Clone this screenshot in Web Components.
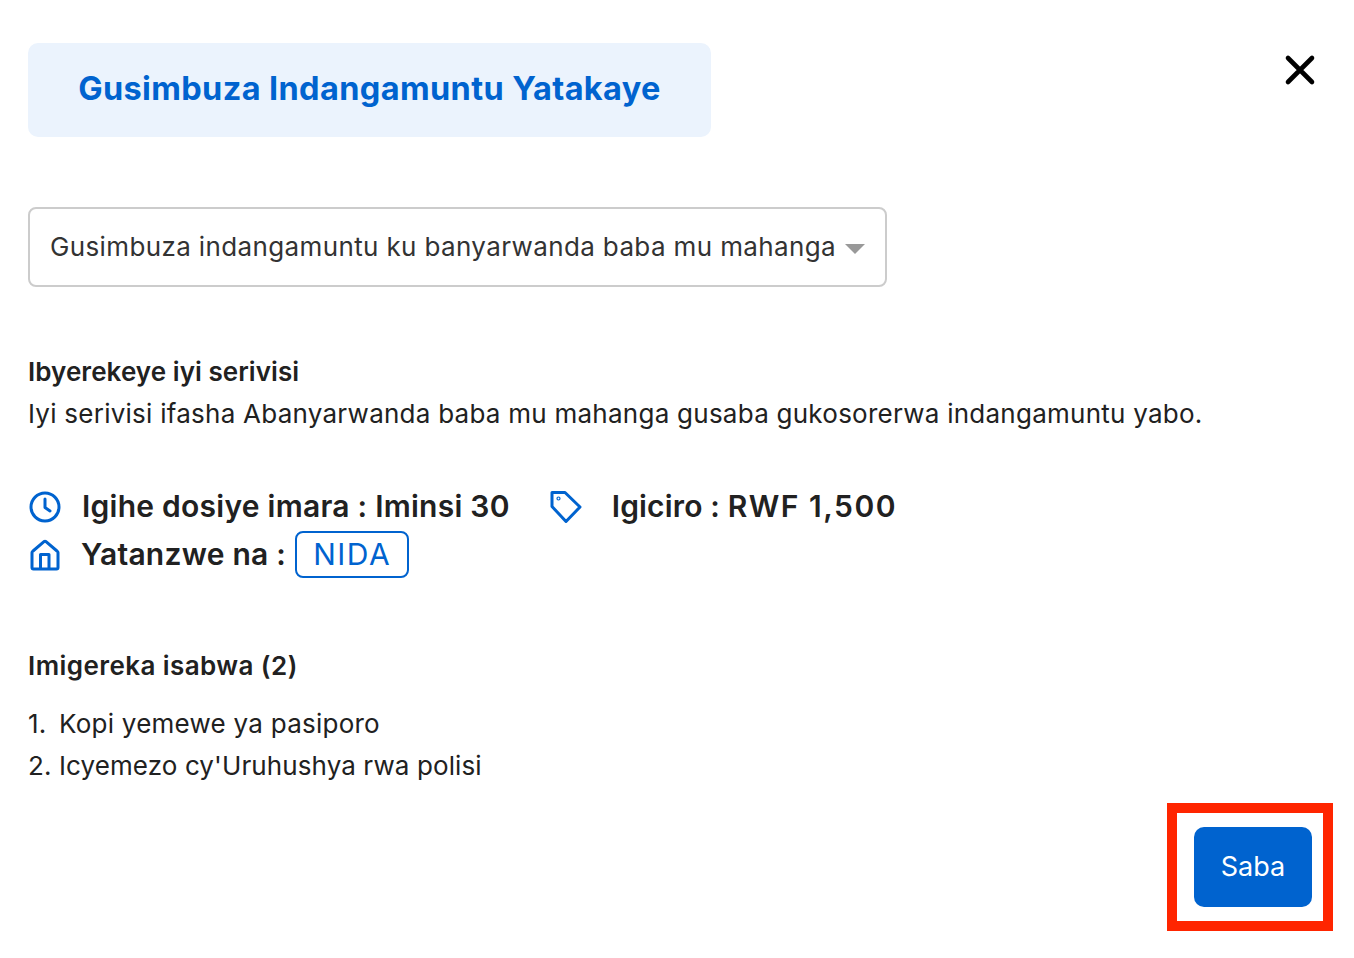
<!DOCTYPE html>
<html><head><meta charset="utf-8"><style>
html,body{margin:0;padding:0;background:#fff}
body{font-family:"Inter","Liberation Sans",sans-serif;color:#212121}
</style></head><body>
<service-modal></service-modal>
<template id="t-modal"><style>
:host{display:block;height:958px;box-sizing:border-box;padding:43px 42px 0 28px;font-size:26px;line-height:42px}
header{display:flex;justify-content:space-between;align-items:flex-start}
h1{margin:0;width:683px;height:94px;box-sizing:border-box;background:#ebf3fd;border-radius:10px;color:#0063cf;font-size:32.5px;font-weight:700;line-height:92px;text-align:center;letter-spacing:.37px;white-space:nowrap}
.close{margin:10px -5px 0 0;width:34px;height:34px;display:block}
.select{margin-top:70px;width:859px;height:80px;box-sizing:border-box;border:2px solid #ccc;border-radius:8px;padding:0 20px 0 20px;display:flex;align-items:center;justify-content:space-between;color:#333;white-space:nowrap;letter-spacing:.37px}
.tri{width:0;height:0;border:10px solid transparent;border-top:10px solid #999;border-bottom:0;margin-top:3px}
.about{margin-top:64px;letter-spacing:.25px}
.about b{letter-spacing:.06px}
b{font-weight:600}
.meta{margin-top:47px;font-size:30px;font-weight:600;line-height:48px;letter-spacing:.25px}
.row{display:flex;align-items:center;height:48px;white-space:nowrap}
.row svg{flex:none;display:block;position:relative;top:1px}
.tag{margin-left:9px;font-weight:400;color:#0063cf;border:2px solid #0063cf;border-radius:8px;height:47px;box-sizing:border-box;line-height:43px;padding:0 16px;letter-spacing:1.5px}
.price{letter-spacing:.15px}
.price em{font-style:normal;letter-spacing:1.5px}
.req{margin-top:67px}
.req b{letter-spacing:.43px}
ol{margin:16px 0 0;padding:0;list-style:none}
li span{display:inline-block;width:31px}
footer{display:flex;justify-content:flex-end;margin-top:40px}
</style>
<header><h1>Gusimbuza Indangamuntu Yatakaye</h1>
<svg class="close" viewBox="0 0 34 34" fill="none" stroke="#000" stroke-width="4.600" stroke-linecap="round"><path d="M5 5 29 29M29 5 5 29"/></svg></header>
<div class="select"><span>Gusimbuza indangamuntu ku banyarwanda baba mu mahanga</span><i class="tri"></i></div>
<div class="about"><b>Ibyerekeye iyi serivisi</b><br>Iyi serivisi ifasha Abanyarwanda baba mu mahanga gusaba gukosorerwa indangamuntu yabo.</div>
<div class="meta">
<div class="row">
<svg width="34" height="34" viewBox="0 0 34 34" fill="none" stroke="#0063cf" stroke-width="3" stroke-linecap="round" stroke-linejoin="round" style="margin-right:20px"><circle cx="17" cy="17" r="14"/><path d="M17 9v8.500l5 3.500"/></svg>
<span>Igihe dosiye imara : Iminsi 30</span>
<svg width="34" height="34" viewBox="0 0 34 34" fill="none" stroke="#0063cf" stroke-width="3" stroke-linejoin="round" style="margin:0 29px 0 39px"><path d="M3 2.500H16L31 17 17 31.500 3 16.500Z"/><circle cx="9.500" cy="8.500" r=".6"/></svg>
<span class="price">Igiciro : <em>RWF 1,500</em></span></div>
<div class="row">
<svg width="34" height="34" viewBox="0 0 34 34" fill="none" stroke="#0063cf" stroke-width="3" stroke-linejoin="round" style="margin-right:19px"><path d="M4 14.500Q4 13.500 5 13L16 3.600Q17 3 18 3.600L29 13Q30 13.500 30 14.500V29.500Q30 31 28.500 31H5.500Q4 31 4 29.500ZM12.500 31V16.500H21V31"/></svg>
<span>Yatanzwe na :</span><span class="tag">NIDA</span></div>
</div>
<div class="req"><b>Imigereka isabwa (2)</b><ol><li style="letter-spacing:.25px"><span>1.</span>Kopi yemewe ya pasiporo</li><li style="letter-spacing:.1px"><span>2.</span>Icyemezo cy'Uruhushya rwa polisi</li></ol></div>
<footer><action-button>Saba</action-button></footer>
</template>
<template id="t-btn"><style>
:host{display:block;position:relative;width:118px;height:80px;background:#0063cf;border-radius:10px;color:#fff;font-size:27px;line-height:80px;text-align:center}
.mark{position:absolute;left:-27px;top:-24px;width:166px;height:128px;box-sizing:border-box;border:10px solid #ff2500}
</style><slot></slot><div class="mark"></div></template>
<script>
function def(n,t){customElements.define(n,class extends HTMLElement{constructor(){super();this.attachShadow({mode:"open"}).appendChild(document.getElementById(t).content.cloneNode(true))}})}
def("action-button","t-btn");def("service-modal","t-modal");
</script>
</body></html>
